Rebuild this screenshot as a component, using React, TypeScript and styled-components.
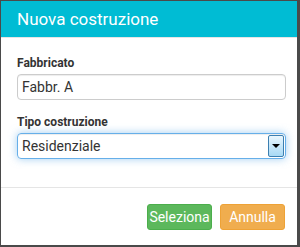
import React from "react";
import styled, { createGlobalStyle } from "styled-components";

const GlobalStyle = createGlobalStyle`
  html, body {
    margin: 0;
    padding: 0;
    background: #3a3a3a;
    font-family: Roboto, "Liberation Sans", Arial, sans-serif;
  }
`;

const Backdrop = styled.div`
  width: 300px;
  height: 247px;
  padding: 1px 3px 2px 1px;
  box-sizing: border-box;
  background: #4a4a4a;
`;

const Dialog = styled.div`
  height: 244px;
  background: #fff;
  display: flex;
  flex-direction: column;
`;

const Header = styled.div`
  background: #00bcd4;
  height: 36px;
  border-bottom: 1px solid #e5e5e5;
  display: flex;
  align-items: center;
  padding: 0 16px;
`;

const Title = styled.h4`
  margin: 0;
  color: #fff;
  font-size: 17px;
  font-weight: 400;
`;

const Body = styled.div`
  padding: 18px 11px 0 16px;
  height: 150px;
  border-bottom: 1px solid #e5e5e5;
  box-sizing: border-box;
`;

const Group = styled.div`
  margin-bottom: 15px;
`;

const Label = styled.label`
  display: block;
  font-size: 12px;
  font-weight: 700;
  color: #333;
  margin-bottom: 4px;
`;

const Input = styled.div<{ $focus?: boolean }>`
  height: 26px;
  box-sizing: border-box;
  border: 1px solid ${(p) => (p.$focus ? "#66afe9" : "#ccc")};
  border-radius: 4px;
  display: flex;
  align-items: center;
  padding-left: 4px;
  font-size: 14px;
  color: #333;
  box-shadow: ${(p) =>
    p.$focus
      ? "inset 0 1px 1px rgba(0,0,0,.075), 0 0 8px rgba(102,175,233,.6)"
      : "inset 0 1px 1px rgba(0,0,0,.075)"};
`;

const Value = styled.span`
  flex: 1;
`;

const DropButton = styled.div`
  width: 16px;
  height: 22px;
  margin-right: 1px;
  box-sizing: border-box;
  border: 1px solid #3c7fb1;
  border-radius: 2px;
  background: linear-gradient(#eaf6fd, #a7d9f5);
  display: flex;
  align-items: center;
  justify-content: center;
`;

const Arrow = styled.div`
  width: 0;
  height: 0;
  border-left: 4px solid transparent;
  border-right: 4px solid transparent;
  border-top: 4px solid #000;
`;

const Footer = styled.div`
  flex: 1;
  display: flex;
  justify-content: flex-end;
  align-items: center;
  gap: 8px;
  padding: 0 12px 0 0;
`;

const Button = styled.button<{ $color: string; $border: string }>`
  height: 26px;
  width: 65px;
  padding: 0;
  box-sizing: border-box;
  font-family: inherit;
  font-size: 14px;
  color: #fff;
  background: ${(p) => p.$color};
  border: 1px solid ${(p) => p.$border};
  border-radius: 3px;
  white-space: nowrap;
`;

export default function App() {
  return (
    <>
      <GlobalStyle />
      <Backdrop>
        <Dialog>
          <Header>
            <Title>Nuova costruzione</Title>
          </Header>
          <Body>
            <Group>
              <Label>Fabbricato</Label>
              <Input>
                <Value>Fabbr. A</Value>
              </Input>
            </Group>
            <Group>
              <Label>Tipo costruzione</Label>
              <Input $focus>
                <Value>Residenziale</Value>
                <DropButton>
                  <Arrow />
                </DropButton>
              </Input>
            </Group>
          </Body>
          <Footer>
            <Button $color="#5cb85c" $border="#4cae4c">
              Seleziona
            </Button>
            <Button $color="#f0ad4e" $border="#eea236">
              Annulla
            </Button>
          </Footer>
        </Dialog>
      </Backdrop>
    </>
  );
}
